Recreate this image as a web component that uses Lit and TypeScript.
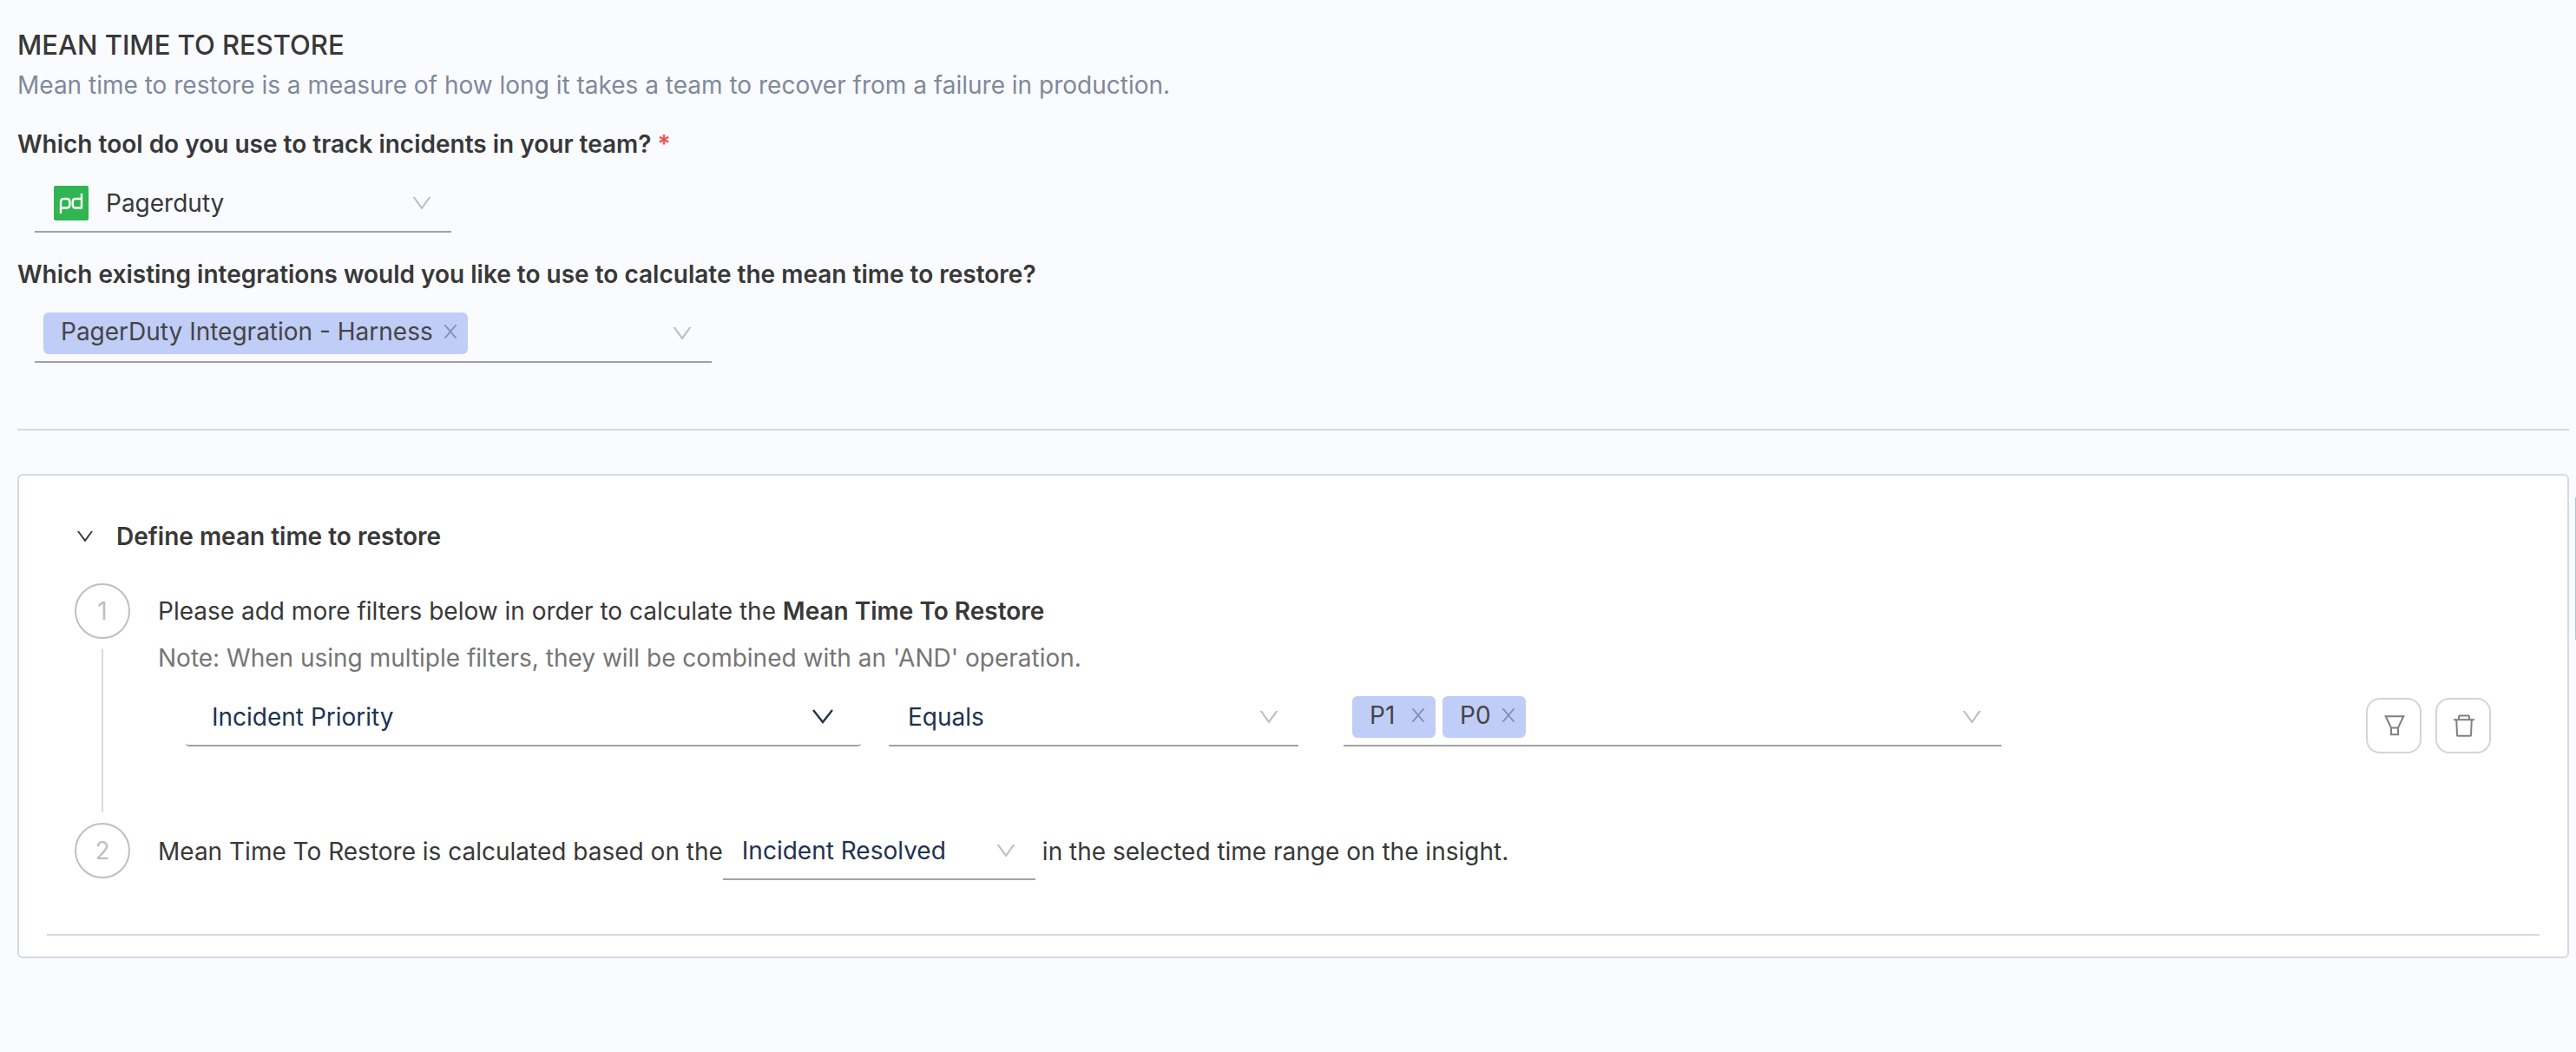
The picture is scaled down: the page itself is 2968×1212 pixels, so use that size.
import { LitElement, html, css } from "lit";
import { customElement, property, state } from "lit/decorators.js";

const downIcon = html`<svg class="down" viewBox="0 0 1024 1024" aria-hidden="true">
  <path fill="currentColor" d="M884 256h-75c-5.1 0-9.9 2.5-12.9 6.6L512 654.2 227.9 262.6c-3-4.1-7.8-6.6-12.9-6.6h-75c-6.5 0-10.3 7.4-6.5 12.7l352.6 486.1c12.8 17.6 39 17.6 51.7 0l352.6-486.1c3.9-5.3.1-12.7-6.4-12.7z"/>
</svg>`;

const strongDownIcon = html`<svg class="down strong" viewBox="0 0 28 28" aria-hidden="true">
  <path fill="none" stroke="currentColor" stroke-width="2.4" d="M3 6L14 20L25 6"/>
</svg>`;

const closeIcon = html`<svg class="close" viewBox="0 0 1024 1024" aria-hidden="true">
  <path fill="currentColor" d="M563.8 512l262.5-312.9c4.4-5.2.7-13.1-6.1-13.1h-79.8c-4.7 0-9.2 2.1-12.3 5.7L511.6 449.8 295.1 191.7c-3-3.6-7.5-5.7-12.3-5.7H203c-6.8 0-10.5 7.9-6.1 13.1L459.4 512 196.9 824.9A7.95 7.95 0 00203 838h79.8c4.7 0 9.2-2.1 12.3-5.7l216.5-258.1 216.5 258.1c3 3.6 7.5 5.7 12.3 5.7h79.8c6.8 0 10.5-7.9 6.1-13.1L563.8 512z"/>
</svg>`;

const pagerdutyLogo = html`<svg class="logo" viewBox="0 0 40 40" aria-hidden="true">
  <rect width="40" height="40" rx="2" fill="#2fb551"/>
  <g fill="none" stroke="#fff" stroke-width="2.4" stroke-linejoin="round">
    <path d="M8 32V18.500Q8 15 11.500 15H15Q18.300 15 18.300 18.500V22Q18.300 25.500 15 25.500H8"/>
    <path d="M32 9V25.500H25Q21.700 25.500 21.700 22V18.500Q21.700 15 25 15H32"/>
  </g>
</svg>`;

const filterIcon = html`<svg class="action-icon" viewBox="0 0 28 28" aria-hidden="true">
  <g fill="none" stroke="currentColor" stroke-width="2">
    <path d="M4.700 3.200H25.300L19 16.500V24.200H11V16.500Z"/>
    <path d="M11 16.500H19"/>
  </g>
</svg>`;

const trashIcon = html`<svg class="action-icon" viewBox="0 0 28 28" aria-hidden="true">
  <g fill="none" stroke="currentColor" stroke-width="2" stroke-linejoin="round">
    <path d="M3 7.200H27"/>
    <path d="M9 7V3.500Q9 2.500 10 2.500H20Q21 2.500 21 3.500V7"/>
    <path d="M6.200 7L7 24.800Q7.100 25.800 8 25.800H22Q22.900 25.800 23 24.800L23.800 7"/>
  </g>
</svg>`;

const controlStyles = css`
  :host {
    display: block;
    font-family: Inter, "Liberation Sans", sans-serif;
    font-size: 28px;
    line-height: 44px;
    color: #383838;
  }
  * {
    box-sizing: border-box;
  }
  button,
  select,
  input {
    margin: 0;
    padding: 0;
    border: 0;
    background: none;
    color: inherit;
    font: inherit;
  }
  button {
    display: inline-flex;
    align-items: center;
    justify-content: center;
    cursor: pointer;
  }
  .down {
    width: 28px;
    height: 28px;
    color: #bfbfbf;
    pointer-events: none;
  }
`;

@customElement("line-select")
class LineSelect extends LitElement {
  @property() label = "";
  @property() value = "";
  @property({ type: Boolean }) logo = false;
  @property({ type: Boolean }) strong = false;

  static styles = [
    controlStyles,
    css`
      .box {
        display: grid;
        grid-template-columns: auto 1fr auto;
        align-items: center;
        height: 66px;
        border-bottom: 2px solid #a1a1a1;
      }
      .box.navy {
        color: #223152;
      }
      .box.rounded {
        border-radius: 4px;
      }
      select {
        grid-row: 1;
        grid-column: 1 / -1;
        width: 100%;
        height: 64px;
        padding: 0 64px 0 22px;
        appearance: none;
        outline: none;
      }
      .rounded select {
        padding-left: 30px;
      }
      .with-logo select {
        padding-left: 82px;
      }
      .logo {
        grid-row: 1;
        grid-column: 1;
        width: 40px;
        height: 40px;
        margin-left: 22px;
        pointer-events: none;
      }
      .down {
        grid-row: 1;
        grid-column: 3;
        margin-right: 20px;
      }
      .strong {
        margin-right: 30px;
        color: #223152;
      }
    `,
  ];

  render() {
    const kind = this.logo ? "with-logo" : this.strong ? "navy rounded" : "navy";
    return html`<div class="box ${kind}">
      <select aria-label=${this.label}>
        <option>${this.value}</option>
      </select>
      ${this.logo ? pagerdutyLogo : null}
      ${this.strong ? strongDownIcon : downIcon}
    </div>`;
  }
}

@customElement("tag-select")
class TagSelect extends LitElement {
  @property() label = "";
  @property({ type: Array }) values: string[] = [];

  static styles = [
    controlStyles,
    css`
      .box {
        display: flex;
        align-items: center;
        gap: 8px;
        height: 66px;
        padding: 0 20px 0 10px;
        border-bottom: 2px solid #a1a1a1;
      }
      .tag {
        display: flex;
        align-items: center;
        justify-content: space-between;
        gap: 8px;
        min-width: 96px;
        height: 48px;
        padding: 0 8px 4px 20px;
        border-radius: 6px;
        background: #c0cdf7;
        color: #454545;
        white-space: nowrap;
      }
      .close {
        width: 24px;
        height: 24px;
        color: #8590b0;
      }
      input {
        flex: 1;
        min-width: 0;
        outline: none;
      }
    `,
  ];

  private remove(value: string) {
    this.values = this.values.filter((v) => v !== value);
  }

  render() {
    return html`<div class="box">
      ${this.values.map(
        (v) => html`<span class="tag"
          >${v}<button aria-label="Remove ${v}" @click=${() => this.remove(v)}>${closeIcon}</button></span
        >`
      )}
      <input type="text" role="combobox" aria-expanded="false" aria-label=${this.label} />
      ${downIcon}
    </div>`;
  }
}

@customElement("app-root")
class AppRoot extends LitElement {
  @state() private open = true;

  static styles = [
    controlStyles,
    css`
      :host {
        min-height: 100vh;
        background: #fafbff;
      }
      .page {
        display: grid;
        grid-template-columns: minmax(0, 1fr) 1px;
        column-gap: 7px;
        padding: 28px 0 28px 20px;
      }
      .scroll-thumb {
        height: 164px;
        margin-top: 545px;
        background: #a9c9e6;
      }
      h1,
      h2,
      p {
        margin: 0;
        font-size: 28px;
        font-weight: 400;
      }
      h1 {
        font-size: 31px;
        line-height: 48px;
        font-weight: 500;
      }
      .lead {
        color: #7e899d;
      }
      .field {
        margin-top: 24px;
      }
      .field + .field {
        margin-top: 26px;
      }
      .question {
        font-weight: 600;
      }
      .required {
        color: #ee5350;
      }
      .tool,
      .integrations {
        max-width: 480px;
        margin: 14px 20px 0;
      }
      .integrations {
        max-width: 780px;
      }
      hr {
        height: 2px;
        margin: 0;
        border: 0;
        background: #d7d9e0;
      }
      .split {
        margin: 76px 0 50px;
      }
      .card {
        padding: 48px 32px 24px;
        border: 2px solid #d7d9e0;
        border-radius: 6px;
        background: #fff;
      }
      .card-body {
        padding: 0 32px;
      }
      h2 {
        display: flex;
      }
      h2 button {
        gap: 24px;
        font-weight: 600;
      }
      h2 .down {
        width: 24px;
        color: #383838;
      }
      .steps {
        margin: 32px 0 62px;
        padding: 0;
        list-style: none;
      }
      .step {
        display: flex;
        gap: 32px;
      }
      .rail {
        display: flex;
        flex: none;
        flex-direction: column;
        align-items: center;
        gap: 12px;
      }
      .number {
        display: flex;
        align-items: center;
        justify-content: center;
        width: 64px;
        height: 64px;
        border: 2px solid #bfbfbf;
        border-radius: 50%;
        color: #bfbfbf;
      }
      .line {
        flex: 1;
        width: 2px;
        margin-bottom: 12px;
        background: #d9d9d9;
      }
      .content {
        flex: 1;
        min-width: 0;
        padding: 10px 24px 80px 0;
      }
      .note {
        margin-top: 10px;
        color: #757575;
      }
      .filters {
        display: grid;
        grid-template-columns: 778fr 472fr 778fr 356fr auto;
        column-gap: 32px;
        margin: 14px 0 0 32px;
      }
      .values {
        margin-left: 20px;
      }
      .actions {
        display: flex;
        grid-column: 5;
        gap: 16px;
        margin-top: 10px;
      }
      .actions button {
        width: 64px;
        height: 64px;
        border: 2px solid #d4d4d4;
        border-radius: 16px;
        color: #808080;
      }
      .action-icon {
        width: 28px;
        height: 28px;
      }
      .sentence {
        display: flex;
        align-items: center;
      }
      .measure {
        width: 360px;
        margin-right: 8px;
      }
    `,
  ];

  private renderSteps() {
    return html`<ol class="steps">
      <li class="step">
        <div class="rail"><span class="number">1</span><span class="line"></span></div>
        <div class="content">
          <p>Please add more filters below in order to calculate the <b class="question">Mean Time To Restore</b></p>
          <p class="note">Note: When using multiple filters, they will be combined with an 'AND' operation.</p>
          <div class="filters">
            <line-select strong label="Filter field" value="Incident Priority"></line-select>
            <line-select label="Operator" value="Equals"></line-select>
            <tag-select class="values" label="Priorities" .values=${["P1", "P0"]}></tag-select>
            <div class="actions">
              <button aria-label="Add filter">${filterIcon}</button>
              <button aria-label="Delete filter">${trashIcon}</button>
            </div>
          </div>
        </div>
      </li>
      <li class="step">
        <div class="rail"><span class="number">2</span></div>
        <div class="sentence">
          <span>Mean Time To Restore is calculated based on the</span>
          <line-select class="measure" label="Calculated on" value="Incident Resolved"></line-select>
          <span>in the selected time range on the insight.</span>
        </div>
      </li>
    </ol>`;
  }

  render() {
    return html`<div class="page">
      <main>
        <h1>MEAN TIME TO RESTORE</h1>
        <p class="lead">Mean time to restore is a measure of how long it takes a team to recover from a failure in production.</p>
        <div class="field">
          <div class="question">Which tool do you use to track incidents in your team? <span class="required">*</span></div>
          <line-select class="tool" logo label="Incident tracking tool" value="Pagerduty"></line-select>
        </div>
        <div class="field">
          <div class="question">Which existing integrations would you like to use to calculate the mean time to restore?</div>
          <tag-select class="integrations" label="Integrations" .values=${["PagerDuty Integration - Harness"]}></tag-select>
        </div>
        <hr class="split" />
        <section class="card">
          <div class="card-body">
            <h2>
              <button aria-expanded=${this.open} @click=${() => (this.open = !this.open)}>
                ${downIcon}Define mean time to restore
              </button>
            </h2>
            ${this.open ? this.renderSteps() : null}
          </div>
          <hr />
        </section>
      </main>
      <div class="scroll-thumb"></div>
    </div>`;
  }
}
